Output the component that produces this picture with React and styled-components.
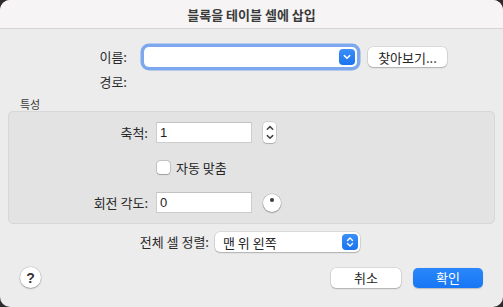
import React from 'react';
import styled, { createGlobalStyle } from 'styled-components';

const GlobalStyle = createGlobalStyle`
  html, body {
    margin: 0;
    padding: 0;
    background: #2f2a2f;
  }
  body {
    font-family: "Noto Sans CJK KR", "Liberation Sans", sans-serif;
    font-size: 13px;
    color: #262626;
  }
`;

const Window = styled.div`
  width: 503px;
  height: 307px;
  background: #ececec;
  border-radius: 10px;
  overflow: hidden;
  display: flex;
  flex-direction: column;
`;

const TitleBar = styled.div`
  height: 28px;
  flex: none;
  background: #f6f4f4;
  border-bottom: 1px solid #d4d4d4;
  display: flex;
  align-items: center;
  justify-content: center;
  font-size: 13px;
  font-weight: 700;
  color: #3b3b3b;
`;

const Row = styled.div`
  display: flex;
  align-items: center;
  height: ${props => props.h || 20}px;
  margin-top: ${props => props.mt || 0}px;
  gap: ${props => props.gap || 0}px;
`;

const Label = styled.div`
  width: ${props => props.w}px;
  flex: none;
  text-align: right;
  font-size: 13px;
  line-height: 16px;
  color: #2a2a2a;
`;

const ComboBox = styled.div`
  width: ${props => props.w}px;
  height: 20px;
  flex: none;
  box-sizing: border-box;
  background: #fff;
  border-radius: 5px;
  display: flex;
  align-items: center;
  justify-content: space-between;
  padding: 0 2px 0 8px;
  box-shadow: ${props =>
    props.focused
      ? '0 0 0 3.5px #7ea8ee'
      : '0 0 0 0.5px rgba(0,0,0,0.15), 0 1px 1.5px rgba(0,0,0,0.2)'};
  font-size: 13px;
`;

const BlueKnob = styled.div`
  width: 16px;
  height: 16px;
  border-radius: 4px;
  background: linear-gradient(#3a8ff8, #1b73ee);
  display: flex;
  align-items: center;
  justify-content: center;
`;

const Button = styled.div`
  width: ${props => props.w}px;
  height: 20px;
  flex: none;
  box-sizing: border-box;
  border-radius: 5px;
  display: flex;
  align-items: center;
  justify-content: center;
  font-size: 13px;
  background: ${props => (props.primary ? 'linear-gradient(#2a88fa, #1776f4)' : '#fff')};
  color: ${props => (props.primary ? '#fff' : '#262626')};
  box-shadow: ${props =>
    props.primary
      ? '0 0.5px 1px rgba(0,0,0,0.2)'
      : '0 0 0 0.5px rgba(0,0,0,0.15), 0 1px 1.5px rgba(0,0,0,0.2)'};
`;

const SectionTitle = styled.div`
  margin-top: 7px;
  height: 14px;
  line-height: 14px;
  padding-left: 20px;
  font-size: 11px;
  color: #3a3a3a;
`;

const GroupBox = styled.div`
  margin: 0 8px;
  height: 113px;
  box-sizing: border-box;
  border: 1px solid #d7d7d7;
  border-radius: 5px;
  background: #e3e3e3;
  padding-top: 10px;
`;

const TextField = styled.div`
  width: 96px;
  height: 21px;
  box-sizing: border-box;
  flex: none;
  background: #fff;
  border: 1px solid #cdcdcd;
  border-top-color: #c2c2c2;
  padding-left: 3px;
  font-family: "Liberation Sans", sans-serif;
  font-size: 13px;
  line-height: 19px;
  color: #1e1e1e;
`;

const Stepper = styled.div`
  width: 13px;
  height: 21px;
  margin-left: 3px;
  border-radius: 4px;
  background: #fff;
  box-shadow: 0 0 0 0.5px rgba(0,0,0,0.18), 0 1px 1px rgba(0,0,0,0.15);
  display: flex;
  flex-direction: column;
  align-items: center;
  justify-content: space-around;
  padding: 1px 0;
  box-sizing: border-box;
`;

const Dial = styled.div`
  width: 18px;
  height: 18px;
  margin-left: 3px;
  border-radius: 50%;
  background: #fff;
  box-shadow: 0 0 0 0.5px rgba(0,0,0,0.2), 0 1px 1.5px rgba(0,0,0,0.25);
  position: relative;
  &::after {
    content: '';
    position: absolute;
    width: 4px;
    height: 4px;
    border-radius: 50%;
    background: #3a3a3a;
    left: 7px;
    top: 4px;
  }
`;

const CheckBox = styled.div`
  width: 13px;
  height: 13px;
  box-sizing: border-box;
  margin-left: 148px;
  border-radius: 3px;
  background: #fff;
  box-shadow: 0 0 0 0.5px rgba(0,0,0,0.25), 0 0.5px 1px rgba(0,0,0,0.2);
`;

const CheckLabel = styled.span`
  margin-left: 6px;
  font-size: 13px;
  line-height: 16px;
`;

const Footer = styled.div`
  margin-top: 15px;
  padding: 0 20px;
  display: flex;
  align-items: center;
  height: 21px;
`;

const HelpButton = styled.div`
  width: 21px;
  height: 21px;
  border-radius: 50%;
  background: #fff;
  box-shadow: 0 0 0 0.5px rgba(0,0,0,0.15), 0 1px 1.5px rgba(0,0,0,0.25);
  display: flex;
  align-items: center;
  justify-content: center;
  font-family: "Liberation Sans", sans-serif;
  font-size: 14px;
  font-weight: 700;
  color: #333;
`;

const Spacer = styled.div`
  flex: 1;
`;

const Buttons = styled.div`
  display: flex;
  gap: 12px;
`;

const ChevronDown = ({ color = '#fff' }) => (
  <svg width="8" height="6" viewBox="0 0 8 6">
    <path d="M1.3 1.6 L4 4.3 L6.7 1.6" fill="none" stroke={color} strokeWidth="1.5" strokeLinecap="round" strokeLinejoin="round" />
  </svg>
);

const ChevronUp = ({ color = '#fff' }) => (
  <svg width="8" height="6" viewBox="0 0 8 6">
    <path d="M1.3 4.3 L4 1.6 L6.7 4.3" fill="none" stroke={color} strokeWidth="1.5" strokeLinecap="round" strokeLinejoin="round" />
  </svg>
);

const UpDown = () => (
  <svg width="8" height="12" viewBox="0 0 8 12">
    <path d="M1.5 4.5 L4 2 L6.5 4.5 M1.5 7.5 L4 10 L6.5 7.5" fill="none" stroke="#fff" strokeWidth="1.4" strokeLinecap="round" strokeLinejoin="round" />
  </svg>
);

const App = () => (
  <>
    <GlobalStyle />
    <Window>
      <TitleBar>블록을 테이블 셀에 삽입</TitleBar>

      <Row mt={18}>
        <Label w={127}>이름:</Label>
        <ComboBox w={213} focused style={{ marginLeft: 17 }}>
          <span />
          <BlueKnob>
            <ChevronDown />
          </BlueKnob>
        </ComboBox>
        <Button w={79} style={{ marginLeft: 11 }}>찾아보기...</Button>
      </Row>

      <Row mt={7} h={16}>
        <Label w={127}>경로:</Label>
      </Row>

      <SectionTitle>특성</SectionTitle>
      <GroupBox>
        <Row h={21} gap={8}>
          <Label w={139}>축척:</Label>
          <TextField>1</TextField>
          <Stepper>
            <ChevronUp color="#444" />
            <ChevronDown color="#444" />
          </Stepper>
        </Row>
        <Row h={13} mt={18}>
          <CheckBox />
          <CheckLabel>자동 맞춤</CheckLabel>
        </Row>
        <Row h={21} mt={18} gap={8}>
          <Label w={139}>회전 각도:</Label>
          <TextField>0</TextField>
          <Dial />
        </Row>
      </GroupBox>

      <Row mt={8} gap={6}>
        <Label w={209}>전체 셀 정렬:</Label>
        <ComboBox w={145}>
          <span>맨 위 왼쪽</span>
          <BlueKnob>
            <UpDown />
          </BlueKnob>
        </ComboBox>
      </Row>

      <Footer>
        <HelpButton>?</HelpButton>
        <Spacer />
        <Buttons>
          <Button w={70}>취소</Button>
          <Button w={70} primary>확인</Button>
        </Buttons>
      </Footer>
    </Window>
  </>
);

export default App;
